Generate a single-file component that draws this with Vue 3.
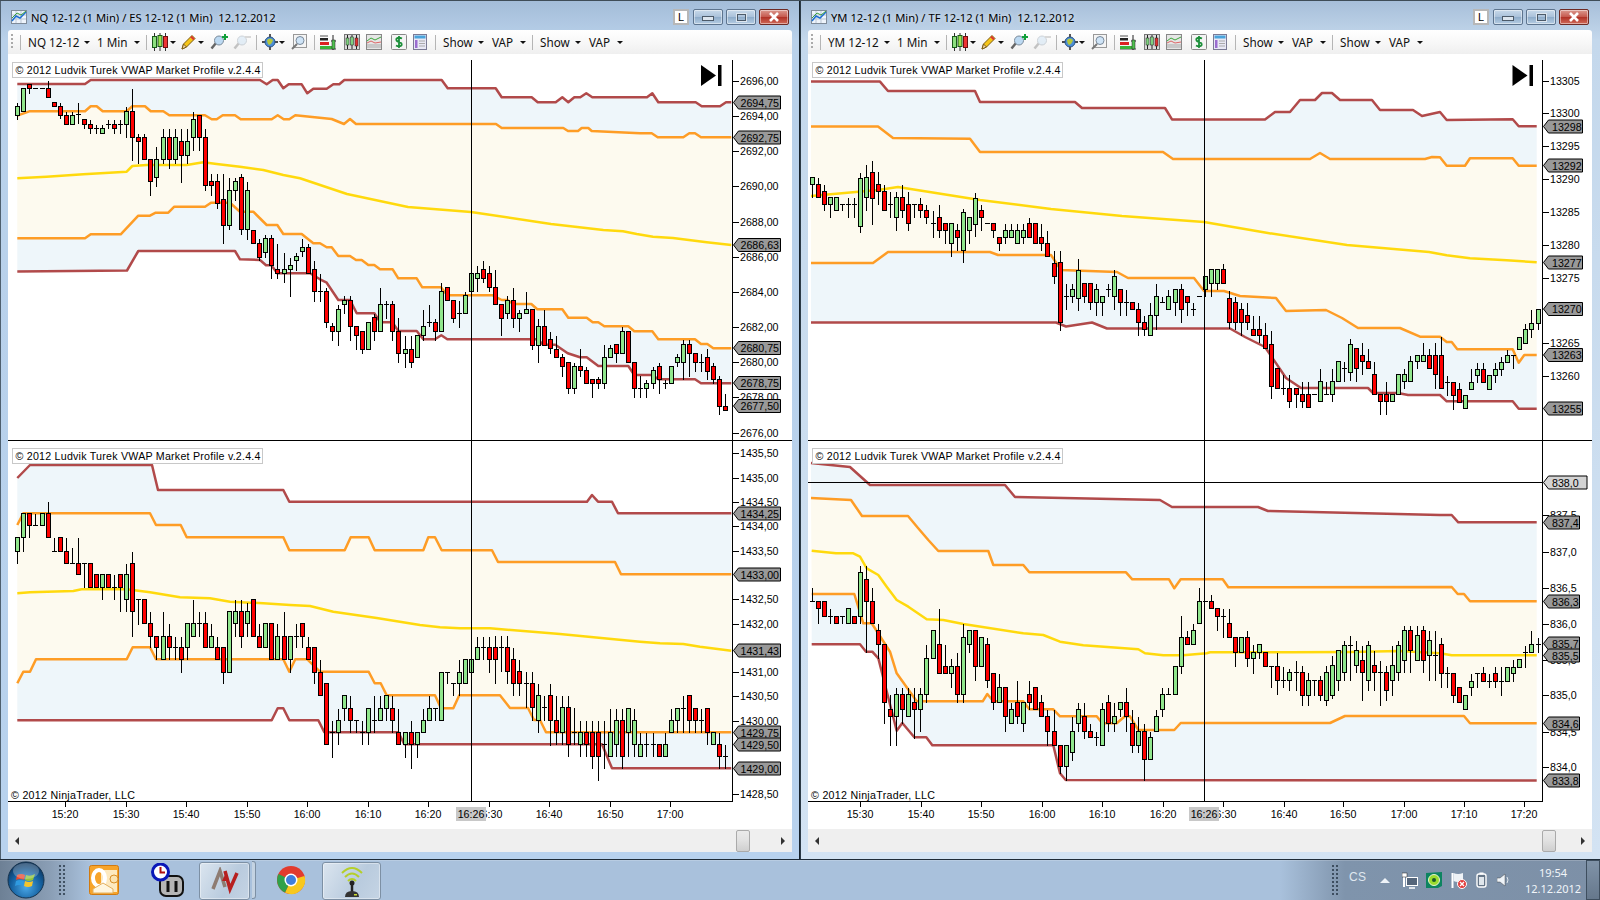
<script setup>
const P = 6.05;
function build(x0, segs) {
  const list = [];
  for (const s of segs) {
    const t = s.d.trim().split(/\s+/);
    let i = s.i;
    for (let n = 0; n + 4 < t.length; n += 5) {
      const [h, a, b, l] = t.slice(n + 1, n + 5).map((v) => s.y + Number(v) * s.k);
      list.push({ i, c: t[n], h, a, b, l });
      i++;
    }
  }
  return paths(x0, list);
}
function paths(x0, list) {
  let wick = '', green = '', red = '';
  for (const c of list) {
    const x = Math.round(x0 + P * c.i) + 0.5;
    const h = Math.round(c.h) + 0.5, a = Math.round(c.a) + 0.5, b = Math.round(c.b) + 0.5, l = Math.round(c.l) + 0.5;
    if (h !== l) wick += `M${x} ${h}V${l}`;
    if (c.c === 'd' || a === b) {
      wick += `M${x - 2.5} ${a}H${x + 2.5}`;
    } else {
      const r = `M${x - 2} ${a}h4V${b}h-4z`;
      if (c.c === 'g') green += r; else red += r;
    }
  }
  return { wick, green, red };
}
function gen3() {
  const an = [[0,185],[2.5,201],[8,201],[10,176],[12.6,204],[17.6,209],[22.7,230],[25.2,230],[27.8,211],[31,237],[37,230],[39.6,257],[41.8,298],[43.8,281],[47.2,296],[50.5,286],[53,308],[55.6,327],[57.3,306],[60.7,296],[63.2,306],[65.8,275],[67.9,267],[69,311],[71.7,321],[75,344],[77,378],[79.3,396],[82.6,400],[85,393],[86.8,374],[89.8,357],[91.9,367],[93.6,395],[96,395],[98.3,374],[100.6,354],[103.4,367]];
  const st = 6.57;
  let seed = 11;
  const rnd = () => { seed = (seed * 16807) % 2147483647; return seed / 2147483647; };
  const center = (i) => {
    for (let k = 0; k < an.length - 1; k++) {
      if (i >= an[k][0] && i <= an[k + 1][0]) {
        const f = (i - an[k][0]) / (an[k + 1][0] - an[k][0]);
        return an[k][1] + (an[k + 1][1] - an[k][1]) * f;
      }
    }
    return an[an.length - 1][1];
  };
  const big = { 8: ['g', 172, 178, 226, 232], 10: ['r', 160, 172, 198, 224], 41: ['r', 250, 262, 322, 330], 76: ['r', 330, 344, 386, 398], 44: ['g', 258, 270, 298, 310], 27: ['g', 192, 198, 224, 236], 25: ['g', 208, 212, 250, 262], 89: ['g', 338, 344, 372, 380], 69: ['r', 290, 298, 322, 328] };
  const list = [];
  for (let i = 0; i < 104; i++) {
    if (big[i]) { const b = big[i]; list.push({ i, c: b[0], h: b[1], a: b[2], b: b[3], l: b[4] }); continue; }
    const m = center(i) + (rnd() - 0.5) * 8;
    const n = [0, 1, 1, 2, 2, 3][Math.floor(rnd() * 6)];
    const a = Math.round((m - n * st / 2) / st) * st;
    const b = a + n * st;
    const dir = center(i + 1) - center(i - 1);
    list.push({ i, c: n === 0 ? 'd' : (dir + (rnd() - 0.5) * 10 < 0 ? 'g' : 'r'), h: a - st * Math.floor(rnd() * 3), a, b, l: b + st * Math.floor(rnd() * 3) });
  }
  return list;
}
function seg3(x0) {
  const tail = [
    ['r',828,885,985,985],['d',945,966,966,1006],['r',966,966,1006,1046],['r',966,986,1025,1025],['g',1006,1006,1045,1045],['g',925,966,986,986],['g',905,926,946,966],['r',905,926,966,966],['g',946,946,986,986],['g',905,926,946,966],['g',888,907,926,945],['g',866,885,907,907],['d',885,885,885,925],['g',830,830,868,868],['g',788,808,848,848],['g',748,788,808,830],['g',748,748,788,808]
  ].map((v, n) => ({ i: 104 + n, c: v[0], h: 60 + v[1] / 3, a: 60 + v[2] / 3, b: 60 + v[3] / 3, l: 60 + v[4] / 3 }));
  return paths(x0, gen3().concat(tail));
}

const c1 = build(17.3, [
  { i: 0, y: 60, k: 1 / 3, d: `g 127 139 166 178 g 85 85 154 154 r 73 73 85 100 d 85 85 85 85 d 85 85 85 85 r 60 85 112 112 r 127 127 139 139 r 127 139 166 175 r 153 166 193 193 g 153 166 193 193 d 127 163 163 190 r 178 178 193 205 r 178 193 205 220 d 193 205 205 220 g 193 205 220 220 d 178 193 193 205 r 178 193 205 220 d 178 193 193 220 g 139 154 193 232 r 85 154 232 300 r 220 232 244 310 r 220 232 298 298 r 298 298 364 405 g 258 298 352 378 g 205 232 298 310 r 205 232 298 325 g 205 232 298 310 r 205 244 286 365 g 205 244 286 310 g 153 178 232 270 r 165 166 232 270 r 205 232 376 390 r 340 364 376 405 r 340 364 430 445 r 340 418 496 550 g 352 391 496 508 g 352 364 391 420 r 340 352 508 522 g 364 391 508 538` },
  { i: 39, y: 230, k: 1 / 3, d: `r 0 0 40 40 r 25 40 80 90 g 12 25 65 80 r 12 25 106 145 r 40 118 130 145 g 65 118 130 157 g 80 106 118 197 g 65 79 91 120 g 25 52 64 78 r 40 52 130 130 r 90 118 184 212 d 130 184 184 212 r 172 184 277 290 r 277 289 303 330 g 222 238 303 344 g 195 211 223 250 r 195 211 289 330 r 289 289 316 356 r 304 304 356 370 g 277 277 356 356 r 250 262 304 330 g 172 223 304 304 d 210 223 223 263 r 210 223 304 330 r 262 304 370 395 g 316 356 370 410 r 316 356 395 410 g 316 316 382 382 g 237 289 316 330 d 223 277 277 289 r 263 277 304 330 g 157 184 304 304 r 172 172 211 211 r 211 211 263 277 d 211 250 250 290 g 184 196 250 250 g 105 130 184 184 g 105 130 145 184 r 90 118 145 157 r 105 130 172 184 r 118 172 223 223 r 223 223 263 316 g 195 211 250 263 r 172 211 263 290 g 237 250 263 304 g 184 238 250 250 r 238 238 344 356 g 263 289 344 395 r 237 289 344 344 r 304 328 355 370 r 316 356 382 382 r 370 382 409 437 r 395 395 475 488 g 395 409 475 488 r 355 409 421 437 r 409 421 460 460 r 448 448 460 502 r 437 448 460 475 g 343 382 460 475 g 343 355 382 382 r 343 343 370 395 g 289 304 370 370 r 304 304 395 395 r 395 395 475 502 d 435 475 475 502 g 448 460 475 502 g 408 421 460 475 r 395 409 448 488 d 448 460 460 475 g 408 409 460 460 g 370 382 395 408 g 328 343 395 448 r 328 343 370 437 r 370 370 395 422 d 370 395 395 422 r 355 382 422 448 r 395 409 448 460 r 435 448 528 553 r 488 528 541 541` }
]);
const c2 = build(17.3, [
  { i: 0, y: 490, k: 1 / 3, d: `g 142 142 182 218 g 70 70 142 182 r 70 70 106 142 d 70 106 106 106 g 70 70 106 106 r 33 70 142 142 d 142 182 182 182 r 142 142 182 182 r 142 182 218 218 d 170 218 218 218 r 142 218 253 253 d 218 218 218 290 r 218 218 290 290 r 253 253 290 290 g 253 253 290 326 r 253 253 290 290 d 253 290 290 326 r 253 253 290 362 g 218 253 326 362 r 182 218 362 437 d 326 326 326 402 r 326 326 400 400 r 362 400 437 472 r 437 437 472 508 g 362 437 508 508 r 400 437 472 508 d 437 472 472 508 r 437 472 508 545 g 400 400 472 508 g 326 400 437 437 d 362 400 400 437 r 362 400 472 472 g 400 437 472 472 r 437 472 508 508 r 472 472 545 580 g 362 362 545 545 g 326 362 400 437 r 326 362 437 472 g 336 362 400 437 r 326 326 437 437 r 400 437 472 472 g 400 400 472 472 r 400 400 508 508 g 400 437 508 508 r 362 437 508 508 g 437 437 508 545 d 400 437 437 472 r 400 400 437 472 r 437 472 508 508 r 472 472 545 580 r 508 545 616 616 r 580 580 763 763 d 690 727 727 800 g 655 691 727 763 g 616 616 655 690 r 616 655 691 727 d 691 691 691 727 d 691 727 727 763 g 655 655 727 763 d 616 691 691 727 g 616 655 691 691 g 616 616 655 691 r 616 655 691 727 r 655 727 763 763 g 727 727 763 800 r 690 727 763 835 g 727 727 763 800 g 655 691 727 727 g 616 655 691 691 d 655 655 655 691 g 545 545 691 691 d 545 545 545 580 d 580 580 580 616 g 508 545 580 616 g 508 508 580 580 g 472 508 545 545 g 437 472 508 508 d 437 472 472 508 r 437 472 508 545` },
  { i: 79, y: 0, k: 1, d: `r 635 647 659 683 d 635 647 647 671 r 635 647 671 683 r 647 659 683 695 r 659 671 683 695 d 671 683 683 707 r 671 683 707 720 g 683 695 720 732 d 695 707 707 720 r 683 695 720 745 r 695 720 732 744 g 695 707 732 744 r 695 707 744 756 d 707 732 732 744 g 720 732 744 756 r 720 732 744 756 r 720 732 756 768 r 720 732 756 780 d 720 744 744 768 g 708 732 756 756 g 708 720 744 756 r 708 720 756 768 g 708 708 732 756 g 708 720 744 756` },
  { i: 103, y: 440, k: 1 / 3, d: `g 877 913 948 948 d 877 913 913 949 d 877 913 913 949 r 913 913 949 949 g 877 913 949 949 g 805 841 877 877 g 805 805 841 877 d 765 805 805 877 r 765 765 841 877 r 805 805 841 877 d 805 841 841 877 r 805 805 877 913 g 877 877 913 913 r 877 913 949 985 d 913 949 949 985` }
]);
const c3 = seg3(811.5);
const c4 = build(811.5, [
  { i: 0, y: 540, k: 1 / 3, d: `d 142 184 184 184 r 184 184 205 250 r 184 184 227 227 d 205 227 227 250 r 227 227 250 250 d 227 227 227 250 g 205 205 250 250 r 227 227 250 250 g 75 97 227 250 r 75 118 184 335 r 142 184 250 250 r 250 271 313 355 r 313 313 485 550 r 463 507 529 616 g 442 463 529 616 r 442 463 507 550 g 442 463 529 529 r 442 485 507 594 g 442 463 507 572 g 313 355 463 485 g 270 270 355 355 r 205 313 400 400 r 313 379 400 400 g 355 379 400 442 r 335 379 463 485 g 250 292 463 485 g 270 270 313 335 r 270 270 379 421 g 292 292 379 379 r 292 313 421 442 r 400 400 485 507 g 400 442 485 485 r 442 442 529 572 g 485 507 550 550 r 421 485 529 550 g 485 485 550 572 r 421 463 485 507 r 442 442 507 507 r 463 485 529 529 r 507 529 572 616 r 507 572 616 616 r 616 616 679 700 g 616 616 679 720 g 529 572 637 660 g 485 507 550 572 r 485 529 572 594 r 550 572 592 592 d 572 592 592 616 g 485 507 616 616 r 463 485 550 572 g 485 529 550 572 g 485 485 507 529 r 442 485 529 572 r 507 550 616 637 g 529 572 616 637 r 550 572 658 720 g 572 592 658 658 g 507 529 572 572 g 442 463 507 529 d 442 463 463 463 g 379 379 463 463 g 225 292 379 400 r 270 292 313 313 g 250 270 313 313 g 142 184 250 250 d 184 184 184 184 r 163 184 205 205 r 205 205 227 270 d 205 227 227 292 r 205 250 292 292 r 292 292 335 379 g 292 292 335 335 r 270 292 355 379 g 313 335 355 400 g 313 313 335 355 r 335 335 379 379 d 379 379 379 442 r 335 379 421 463 d 379 421 421 442` },
  { i: 79, y: 0, k: 1, d: `g 668 672 680 690 d 660 672 672 690 r 665 672 695 705 g 672 680 695 705 d 680 680 680 695 r 675 680 695 700 g 665 672 700 705 g 655 665 695 698 g 650 650 680 690 g 640 645 672 680 d 635 645 645 680 g 640 650 665 672 r 645 660 672 700 g 640 645 680 690 r 650 665 672 690 d 660 672 672 705 r 665 672 690 700 g 645 665 680 695 g 640 645 672 680 g 625 630 660 672 r 625 630 650 672 g 625 635 660 660 r 625 630 660 672 g 630 640 655 680 d 630 655 655 680` },
  { i: 104, y: 440, k: 1 / 3, d: `r 590 613 700 742 d 678 700 700 742 r 700 700 764 785 r 742 742 785 785 g 764 764 808 808 g 700 722 742 764 d 700 700 700 742 r 678 700 722 722 d 700 722 722 742 r 678 700 722 742 d 678 722 722 764 g 680 680 722 722 g 656 680 700 722 g 656 656 680 680 d 615 635 635 680 g 570 613 635 635 d 590 612 612 635` }
]);

function chart(o) {
  const rev = (s) => s.trim().split(/\s+/).reverse().join(' ');
  o.fillA = o.r1 + ' ' + rev(o.o1);
  o.fillB = o.o1 + ' ' + rev(o.o2);
  o.fillC = o.o2 + ' ' + rev(o.r2);
  return o;
}

const boxText = '© 2012 Ludvik Turek VWAP Market Profile v.2.4.4';

const windows = [
  {
    id: 'a', cls: 'win-a', x0: 8, title: 'NQ 12-12 (1 Min) / ES 12-12 (1 Min)  12.12.2012', sym: 'NQ 12-12',
    axis: 732, cross: 471, end: 701, boxX: 12.5, thumb: 'thumb-a', tagText: 8.5,
    times: [['15:20',65],['15:30',126],['15:40',186],['15:50',247],['16:00',307],['16:10',368],['16:20',428],['16:30',489],['16:40',549],['16:50',610],['17:00',670]],
    charts: [
      chart({
        boxY: 62.5, c: c1, tagEnd: 780.5,
        r1: '17.3,84 85,84 90.7,80 260,80 266.7,84.3 272.7,80 277.7,80 283.3,88.3 288.7,84.3 301.7,84.3 307.3,93.3 313.3,88.7 326.7,88.7 333.3,84.3 339.3,84.3 344.3,80 441.7,80 447.7,88.3 495.7,88.3 501.7,97.3 531.7,97.3 537.7,102.3 555.7,102.3 562.3,97.3 568.3,102.3 574.3,97.3 580.3,97.3 586.3,93.3 592.3,97.3 647,97.3 652.3,93.3 658.3,102.3 695.7,102.3 701.7,106.3 720,106.3 726,102.3 731.3,102.3',
        o1: '17.3,115.7 29.3,111.3 85,111.3 90.7,106.3 96.7,106.3 102.7,111.3 126.7,111.3 132.3,106.3 145,106.3 150.7,111.3 163.3,111.3 169.3,115.3 205,115.3 211.7,119.3 216.7,119.3 222.7,115.3 235,115.3 240.7,119.3 271.7,119.3 277.7,115.3 283.7,119.3 289.3,119.3 295.3,115.3 331.7,119 344,124 350,119 356,124 496,124 501.7,128 563.3,128 568,131 578,131 581.7,128 588.3,128 591.7,131 640,133.3 651.7,133.3 657.7,137.3 683.3,137.3 689.3,133.3 695,133.3 701,137.3 731.3,137.3',
        v: '17.3,178.3 46.7,176.7 83.3,174.3 126.7,171.7 132.3,166 146.7,165 186.7,165 203.3,162.3 216.7,164 240,166.7 263.3,170 283.3,175 300,178.3 347,194 408,207 471,212 551,224 603.3,230 623,231.3 636.7,234 653,236.7 673,238 706.7,242.3 731.3,245',
        o2: '17.3,238.3 85,238.3 90.7,234.3 120.7,234.3 138.3,215.7 150,215.7 155.7,212.7 168.3,212.7 174.3,206.7 205,206.7 211,202.7 230,202.7 240,211.7 253.3,211.7 266.7,225 277.3,225 283.3,234 301.7,234 313.3,243.3 320,243.3 326.7,247.3 331.7,247.3 338.3,256 350,256 356,260 361.7,260 368.3,265 374.3,265 380,269.3 392.7,269.3 398.3,278.3 416.7,278.3 422.3,287.3 441,287.3 447.3,295.3 492.7,295.3 501.7,300 507.3,300 513.3,304 531.3,304 537.3,309.3 562.3,309.3 568.3,317.7 586.7,317.7 592.7,322.3 598.3,322.3 604.3,326.3 628.3,326.3 634.3,331.3 652.3,331.3 658.3,339.3 695,339.3 701,344 707.3,344 713.3,348.3 731.3,348.3',
        r2: '17.3,271.5 127,270.5 138.3,251 235,251 240,259.3 260,260 266,265.3 271.3,265.3 277.3,273.3 310,273.3 320,279.3 326.7,282.7 338.3,300 350,300 356.7,313.3 374.3,313.3 380.3,322.3 392.3,322.3 398.3,331 416.7,331 423.3,339.3 435,339.3 441.3,335.3 447.3,339.3 537.3,339.3 543.3,344.7 555.3,344.7 567.7,353.3 580,357.3 586.7,357.3 598.3,366 628.3,366 634.3,375 652.3,375 658.3,379.3 695,379.3 701,383.3 731.3,383.3',
        ticks: [['2696,00',80.7],['2694,00',116],['2692,00',151],['2690,00',186],['2688,00',222],['2686,00',257],['2684,00',291.7],['2682,00',327],['2680,00',362],['2678,00',397],['2676,00',433]],
        tags: [['2694,75',102.5],['2692,75',137.5],['2686,63',245],['2680,75',348],['2678,75',383],['2677,50',406]]
      }),
      chart({
        boxY: 448.5, c: c2, tagEnd: 780.5,
        r1: '17.3,478 30,465 152,465 158,490 283.3,490 289.3,501.7 587,501.7 592,495 598,501.7 612,501.7 618,513.3 731.3,513.3',
        o1: '17.3,525 23.3,513.3 150,513.3 156,525 180.7,525 186.7,537.3 283.3,537.3 289.3,550.3 344.7,550.3 350.7,537.3 368.7,537.3 374.7,550.3 423.3,550.3 428.3,537.3 435,537.3 441.7,550.3 492,550.3 498,562 615,562 621,574.3 731.3,574.3',
        v: '17.3,593.3 30,592.3 73.3,591 81.7,589.3 126.7,589.3 150,592.3 180,597.3 210,598.3 230,601.7 263.3,603.3 290,605 310,606 333.3,611.7 376.7,618 420,625 440,627.3 460,628.3 490,628.3 560,634 640,641.7 660,643.3 683.3,644 700,646.7 731.3,650.7',
        o2: '17.3,683.3 23.3,671.7 30,671.7 36,659.3 126.7,659.3 132.7,647.3 150,647.3 156,659.3 283.3,659.3 289.3,671.7 295.3,659.3 307.3,659.3 320,671.7 368.7,671.7 374.7,683.3 380.7,683.3 386.7,695.3 435,695.3 441,708.3 453.3,708.3 459.3,695.3 500,695.3 510,708 528,708 534,720 540,720 546,732.3 731.3,732.3',
        r2: '17.3,720.3 271.7,720.3 277.7,708.3 283.3,708.3 289.3,720.3 318.3,720.3 324.3,732.3 398.3,732.3 404.3,744.3 602,744.3 612,768.3 731.3,768.3',
        ticks: [['1435,50',453],['1435,00',477.7],['1434,50',502],['1434,00',526],['1433,50',550.7],['1432,50',599],['1432,00',624],['1431,00',672],['1430,50',696],['1430,00',720.7],['1428,50',794]],
        tags: [['1434,25',513.5],['1433,00',574.5],['1431,43',650.5],['1429,75',732.5],['1429,50',744.5],['1429,00',768.5]]
      })
    ],
    copyX: 11
  },
  {
    id: 'b', cls: 'win-b', x0: 808, title: 'YM 12-12 (1 Min) / TF 12-12 (1 Min)  12.12.2012', sym: 'YM 12-12',
    axis: 1542, cross: 1204, end: 1512.5, boxX: 812.5, thumb: 'thumb-b', tagText: 10,
    times: [['15:30',860],['15:40',921],['15:50',981],['16:00',1042],['16:10',1102],['16:20',1163],['16:30',1223],['16:40',1284],['16:50',1343],['17:00',1404],['17:10',1464],['17:20',1524]],
    charts: [
      chart({
        boxY: 62.5, c: c3, tagEnd: 1582.5,
        r1: '811,81.6 880,81.6 888,91 975,91 980,102 1075,102 1082,108 1165,108 1172,119.4 1265,119.4 1275,112 1290,112 1300,100 1315,100 1322,93 1332,93 1340,100 1372,100 1380,110 1413,110 1422,116 1440,112 1446.7,120 1512.7,119.3 1518.7,126.3 1536.7,126.3',
        o1: '811,126.5 878,126.5 893,138 970,138.8 980,152 1163,152 1173,159 1310,159 1320,153 1330,159 1425,159 1432,157 1440,157.3 1446.7,165.7 1465,165.7 1470,158.3 1512.7,158.3 1518.7,165.7 1536.7,165.7',
        v: '811,196 878,190 898,187 980,200 1051,209 1122,216 1204,222 1265,232.6 1347,245 1429,252 1446.7,255.3 1470,258.3 1506.7,260.3 1536.7,262.3',
        o2: '811,263 873,263 888,252 990,252 998,255 1051,255 1061,270 1117,272 1128,278 1194,278 1204,291 1224,291 1240,296 1276,298 1286,311 1326,310 1342,318 1358,328 1400,328 1420,336.7 1440,336.7 1446.7,342 1451.7,342 1457.3,349.3 1512.7,349.3 1518.7,362.7 1524.3,355 1536.7,355',
        r2: '811,322.5 1056,322.5 1066,326.5 1092,322.5 1107,328.5 1230,328.5 1245,337 1265,347 1286,378 1301,388 1368,388 1373,393 1398,393 1408,395 1440,395 1446.7,401.3 1512.7,401.3 1518.7,408.7 1536.7,408.7',
        ticks: [['13305',81],['13300',112.7],['13295',146],['13290',179],['13285',212],['13280',245],['13275',278],['13265',343],['13260',376]],
        tags: [['13298',126.5],['13292',165.5],['13277',262.5],['13270',309],['13263',355],['13255',408.5]]
      }),
      chart({
        boxY: 448.5, c: c4, tagEnd: 1579.5,
        r1: '811,463 850,467 870,485 1005,485 1015,497 1160,500 1172,507 1258,507 1268,511 1440,515 1451.7,515 1458.3,522.3 1536.7,522.3',
        o1: '811,498 851,500 862,516 908,516 918,528 928.3,540 938.3,551 988.3,551 993.3,565 1023.3,565 1029.3,572.3 1126,572.3 1132.3,579.3 1169,579.3 1174.3,588.3 1180.7,579.3 1222.7,579.3 1228.3,587.3 1451.7,587 1457.7,594 1464,594 1470,601.3 1536.7,601.3',
        v: '811.7,550.7 836,553.3 853.3,553.3 860,556.7 866.7,568.3 878.3,575 886.7,586.7 896.7,600 908.3,606.7 926.7,619.3 943.3,620 963.3,624 1023.3,633.3 1043.3,635 1060,641.7 1083.3,645.3 1138.3,649.3 1145,653.3 1163.3,655.3 1183,655.3 1206.7,653.3 1210,652.3 1290,652.3 1350,652 1400,651 1440,653.3 1451.7,655.3 1536.7,655.3',
        o2: '811.7,594 854.3,594 863.3,623.3 871.7,623.3 890,651.7 896.7,673.3 916.7,701.3 982.7,701.3 987.3,694 993.3,701.3 1023.3,701.3 1029.3,709.3 1053.3,709.3 1060,716.3 1096.7,716.3 1102.3,723.3 1116.7,723.3 1125,716.3 1130,716.3 1138.3,730 1174.3,730 1180.7,723 1330,723 1345,716 1464,716 1470,723.3 1536.7,723.3',
        r2: '811.7,644.3 860,644.3 866,651.7 872.3,651.7 878.3,658.3 896.7,730.7 902.3,723 914.3,737.3 926.3,737.3 932.3,745.3 1053.3,745.3 1060,773.3 1065.7,780 1536.7,780.5',
        ticks: [['837,5',515],['837,0',552.3],['836,5',588],['836,0',624],['835,5',660],['835,0',695],['834,5',731.7],['834,0',767.3]],
        tags: [['837,4',522.5],['836,3',601.5],['835,7',643.5],['835,5',655.5],['834,6',723.5],['833,8',780.5]],
        level: 482.5
      })
    ],
    copyX: 811
  }
];

function tagPts(w, y, b) {
  const a = w.axis + 1.5;
  return `${a},${y} ${a + 5},${y - 6.5} ${b},${y - 6.5} ${b},${y + 6.5} ${a + 5},${y + 6.5}`;
}

const toolItems = (sym) => [
  { t: 'grip', w: 9 }, { t: 'sep', w: 8 },
  { t: 'text', l: sym, w: 56 }, { t: 'caret', w: 13 },
  { t: 'text', l: '1 Min', w: 37 }, { t: 'caret', w: 12 }, { t: 'sep', w: 6 },
  { t: 'i', n: 'candles', w: 18 }, { t: 'caret', w: 11 },
  { t: 'i', n: 'pencil', w: 17 }, { t: 'caret', w: 12 },
  { t: 'i', n: 'zin', w: 23 }, { t: 'i', n: 'zout', w: 23 }, { t: 'sep', w: 6 },
  { t: 'i', n: 'globe', w: 17 }, { t: 'caret', w: 12 },
  { t: 'i', n: 'mag', w: 23 }, { t: 'sep', w: 6 },
  { t: 'i', n: 'bars', w: 24 }, { t: 'i', n: 'cbox', w: 22 }, { t: 'i', n: 'lbox', w: 25 }, { t: 'i', n: 'dollar', w: 22 }, { t: 'i', n: 'table', w: 22 }, { t: 'sep', w: 8 },
  { t: 'text', l: 'Show', w: 35 }, { t: 'caret', w: 14 }, { t: 'text', l: 'VAP', w: 28 }, { t: 'caret', w: 12 }, { t: 'sep', w: 8 },
  { t: 'text', l: 'Show', w: 35 }, { t: 'caret', w: 14 }, { t: 'text', l: 'VAP', w: 28 }, { t: 'caret', w: 12 }
];
</script>

<template>
  <div class="screen">
    <div class="desktop">
      <section v-for="w in windows" :key="w.id" class="win" :class="w.cls">
        <header class="titlebar">
          <svg class="app-icon" width="16" height="14" viewBox="0 0 16 14">
            <rect x="0.5" y="0.5" width="15" height="13" fill="#eef4fb" stroke="#7f8b99" />
            <path d="M1 5H15M1 9H15M5 1V13M10 1V13" stroke="#b9c6d6" />
            <path d="M1 11L5 6L9 8L15 2" fill="none" stroke="#1f6fd0" stroke-width="1.5" />
            <path d="M1 8L6 3L10 5L15 1" fill="none" stroke="#3da03d" />
          </svg>
          <span class="title-text">{{ w.title }}</span>
          <span class="fill"></span>
          <span class="l-btn">L</span>
          <span class="cap-btn"><i class="min-glyph"></i></span>
          <span class="cap-btn"><i class="max-glyph"></i></span>
          <span class="cap-btn close"><svg width="14" height="10" viewBox="0 0 14 10"><path d="M3 1L11 9M11 1L3 9" stroke="#fff" stroke-width="2.6" /></svg></span>
        </header>

        <nav class="toolbar">
          <span v-for="(it, n) in toolItems(w.sym)" :key="n" class="slot" :style="{ width: it.w + 'px' }">
            <i v-if="it.t === 'grip'" class="grip"></i>
            <i v-else-if="it.t === 'sep'" class="sep"></i>
            <span v-else-if="it.t === 'text'" class="tool-text">{{ it.l }}</span>
            <i v-else-if="it.t === 'caret'" class="caret"></i>
            <svg v-else-if="it.n === 'candles'" width="16" height="18" viewBox="0 0 16 18">
              <path d="M2.5 0V18M8 0V18M13.5 0V18" stroke="#333" />
              <rect x="0.5" y="3.5" width="4" height="11" fill="#8de07f" stroke="#1a5a1a" />
              <rect x="6" y="2.5" width="4" height="11" fill="#9be24f" stroke="#1a5a1a" />
              <rect x="11.5" y="3.5" width="4" height="11" fill="#e33" stroke="#701010" />
            </svg>
            <svg v-else-if="it.n === 'pencil'" width="15" height="16" viewBox="0 0 15 16">
              <path d="M1 15L2.5 10L11 1.5L14 4.5L5.5 13Z" fill="#f5c518" stroke="#7a5a10" />
              <path d="M1 15L2.5 10L5.5 13Z" fill="#f3d8a8" stroke="#7a5a10" />
              <path d="M10 2.5L13 5.5" stroke="#d33" stroke-width="2" />
            </svg>
            <svg v-else-if="it.n === 'zin' || it.n === 'zout'" width="19" height="16" viewBox="0 0 19 16" :class="{ faded: it.n === 'zout' }">
              <path d="M6 9L1.5 14.5" stroke="#666" stroke-width="2.5" />
              <circle cx="9" cy="6.5" r="4.5" fill="#bcd9f2" stroke="#7a8a9a" />
              <path v-if="it.n === 'zin'" d="M15 0V6M12 3H18" stroke="#12a03a" stroke-width="2" />
              <path v-else d="M12 3H18" stroke="#999" stroke-width="2" />
            </svg>
            <svg v-else-if="it.n === 'globe'" width="16" height="16" viewBox="0 0 16 16">
              <path d="M8 0V16M0 8H16" stroke="#111" stroke-width="1.4" />
              <circle cx="8" cy="8" r="5" fill="#4d8fd6" stroke="#274f84" />
              <path d="M5 6Q8 3 11 6Q10 10 7 11Q5 9 5 6Z" fill="#b5c83c" />
            </svg>
            <svg v-else-if="it.n === 'mag'" width="16" height="16" viewBox="0 0 16 16">
              <rect x="2.5" y="0.5" width="13" height="13" fill="#f5f5f5" stroke="#999" />
              <circle cx="9" cy="6.5" r="4" fill="#cfe4f7" stroke="#7a8a9a" />
              <path d="M6 10L1 15" stroke="#777" stroke-width="2" />
            </svg>
            <svg v-else-if="it.n === 'bars'" width="17" height="17" viewBox="0 0 17 17">
              <path d="M0 2H8M0 15H16" stroke="#555" />
              <rect x="0" y="4" width="8" height="2.5" fill="#222" />
              <rect x="0" y="8" width="9" height="3" fill="#d22" />
              <rect x="0" y="12" width="12" height="3" fill="#3bb33b" />
              <path d="M13 1V16M11 7H16" stroke="#222" />
              <rect x="12" y="6" width="3" height="9" fill="#4fc04f" stroke="#222" stroke-width="0.5" />
            </svg>
            <svg v-else-if="it.n === 'cbox'" width="16" height="16" viewBox="0 0 16 16">
              <rect x="0.5" y="0.5" width="15" height="15" fill="#ddd" stroke="#777" />
              <path d="M3.5 1V15M8 1V15M12.5 1V15" stroke="#222" />
              <rect x="2" y="4" width="3" height="7" fill="#7fd07f" stroke="#222" stroke-width="0.5" />
              <rect x="6.5" y="3" width="3" height="8" fill="#7fd07f" stroke="#222" stroke-width="0.5" />
              <rect x="11" y="4" width="3" height="8" fill="#d33" stroke="#222" stroke-width="0.5" />
            </svg>
            <svg v-else-if="it.n === 'lbox'" width="16" height="16" viewBox="0 0 16 16">
              <rect x="0.5" y="0.5" width="15" height="15" fill="#e6e6e6" stroke="#888" />
              <path d="M1 7L5 4L9 6L15 3" fill="none" stroke="#3aa83a" />
              <path d="M1 9L5 7L9 9L15 8" fill="none" stroke="#d66" />
              <path d="M1 11H15M1 13H15" stroke="#aaa" />
            </svg>
            <svg v-else-if="it.n === 'dollar'" width="16" height="16" viewBox="0 0 16 16">
              <rect x="0.5" y="0.5" width="15" height="15" rx="1" fill="#f4f4f4" stroke="#888" />
              <path d="M11 4.5Q8 3 5.5 4.5Q4.5 7 8 8Q11.5 9 10.5 11.5Q8 13 5 11.5M8 2V14" fill="none" stroke="#1c8f3a" stroke-width="1.8" />
            </svg>
            <svg v-else-if="it.n === 'table'" width="14" height="16" viewBox="0 0 14 16">
              <rect x="0.5" y="0.5" width="13" height="15" fill="#e8e8f5" stroke="#7a7a95" />
              <rect x="1.5" y="1.5" width="11" height="3" fill="#4aa4dc" />
              <rect x="2" y="6" width="2.5" height="8" fill="#9a6ccf" />
              <path d="M6 7H12M6 9.5H12M6 12H12" stroke="#aaa" />
            </svg>
          </span>
        </nav>

        <svg class="chart" width="784" height="775" :viewBox="`${w.x0} 54 784 775`">
          <g v-for="(c, k) in w.charts" :key="k">
            <polygon :points="c.fillA" fill="#eef6fa" />
            <polygon :points="c.fillB" fill="#fdfaef" />
            <polygon :points="c.fillC" fill="#eef6fa" />
            <polyline :points="c.r1" class="ln r" />
            <polyline :points="c.o1" class="ln o" />
            <polyline :points="c.v" class="ln y" />
            <polyline :points="c.o2" class="ln o" />
            <polyline :points="c.r2" class="ln r" />
            <path :d="c.c.wick" class="wick" />
            <path :d="c.c.green" class="body green" />
            <path :d="c.c.red" class="body red" />
            <rect :x="w.boxX" :y="c.boxY" width="250" height="15" class="box" />
            <text :x="w.boxX + 3" :y="c.boxY + 11.5" class="box-text" textLength="245">{{ boxText }}</text>
            <line v-if="c.level" :x1="w.x0" :x2="w.axis" :y1="c.level" :y2="c.level" class="axis-line" />
            <g v-for="t in c.ticks" :key="t[0]">
              <line :x1="w.axis" :x2="w.axis + 7" :y1="Math.round(t[1]) + 0.5" :y2="Math.round(t[1]) + 0.5" class="axis-line" />
              <text :x="w.axis + 8" :y="t[1] + 4" class="lab">{{ t[0] }}</text>
            </g>
            <polygon v-if="c.level" :points="tagPts(w, c.level, 1587)" class="tag light" />
            <text v-if="c.level" :x="w.axis + w.tagText" :y="c.level + 4" class="lab">838,0</text>
            <g v-for="t in c.tags" :key="t[0]">
              <polygon :points="tagPts(w, t[1], c.tagEnd)" class="tag" />
              <text :x="w.axis + w.tagText" :y="t[1] + 4" class="lab">{{ t[0] }}</text>
            </g>
          </g>

          <polygon :points="`${w.end},65 ${w.end + 15},75.5 ${w.end},86`" fill="#000" />
          <rect :x="w.end + 17" y="65" width="3.5" height="21" fill="#000" />

          <line :x1="w.x0" :x2="w.x0 + 784" y1="440.5" y2="440.5" class="axis-line" />
          <line :x1="w.cross + 0.5" :x2="w.cross + 0.5" y1="60" y2="801" class="axis-line" />
          <line :x1="w.axis + 0.5" :x2="w.axis + 0.5" y1="60" y2="801" class="axis-line" />
          <line :x1="w.x0" :x2="w.axis + 1" y1="801.5" y2="801.5" class="axis-line" />

          <text :x="w.copyX" y="799" class="lab" textLength="124">© 2012 NinjaTrader, LLC</text>

          <g v-for="t in w.times" :key="t[0]">
            <line :x1="t[1] + 0.5" :x2="t[1] + 0.5" y1="801" y2="807" class="axis-line" />
            <text :x="t[1]" y="818" class="lab mid">{{ t[0] }}</text>
          </g>
          <rect :x="w.cross - 15" y="807" width="30" height="14" fill="#c8c8c8" />
          <text :x="w.cross" y="818" class="lab mid">16:26</text>
        </svg>

        <div class="scroll">
          <svg width="6" height="10" viewBox="0 0 6 10"><path d="M5 1V9L1 5Z" fill="#333" /></svg>
          <span class="fill"></span>
          <i class="thumb" :class="w.thumb"></i>
          <svg width="6" height="10" viewBox="0 0 6 10"><path d="M1 1V9L5 5Z" fill="#333" /></svg>
        </div>
      </section>
    </div>

    <footer class="taskbar">
      <svg class="orb" width="38" height="38" viewBox="0 0 38 38">
        <defs>
          <radialGradient id="orbG" cx="50%" cy="70%" r="70%">
            <stop offset="0" stop-color="#4aa8e8" />
            <stop offset="0.6" stop-color="#14609f" />
            <stop offset="1" stop-color="#0c2f55" />
          </radialGradient>
        </defs>
        <circle cx="19" cy="19" r="18" fill="url(#orbG)" stroke="#16344f" />
        <path d="M10 14Q14 12 18 14L17 19Q13 17 9 19Z" fill="#e8492e" />
        <path d="M19 14Q23 16 28 13L26 19Q22 21 18 19Z" fill="#8fc33a" />
        <path d="M9 20Q13 18 17 20L16 25Q12 23 8 25Z" fill="#2f9ae0" />
        <path d="M18 20Q22 22 26 20L25 25Q21 27 17 25Z" fill="#f4c52c" />
        <ellipse cx="19" cy="10" rx="13" ry="8" fill="#fff" opacity="0.25" />
      </svg>
      <i class="dots dots-l"></i>
      <span class="tb-slot s-outlook">
        <svg width="30" height="30" viewBox="0 0 30 30">
          <rect x="0.5" y="0.5" width="29" height="29" rx="2" fill="#f7a42a" stroke="#d17a10" />
          <rect x="12" y="5" width="16" height="22" fill="#fde9bf" />
          <ellipse cx="10" cy="13" rx="6" ry="8" fill="none" stroke="#fff" stroke-width="4" />
          <path d="M4 24L14 18L24 24V28H4Z" fill="#fff6df" stroke="#e2b060" />
          <circle cx="25" cy="14" r="4" fill="#fbe3b0" stroke="#d8902a" />
        </svg>
      </span>
      <span class="tb-slot s-clock">
        <svg width="33" height="34" viewBox="0 0 33 34">
          <rect x="9" y="13" width="23" height="20" rx="6" fill="#b5b5b5" stroke="#111" stroke-width="2" />
          <path d="M17 18V29M25 18V29" stroke="#111" stroke-width="3" />
          <circle cx="9.5" cy="9" r="8" fill="#fff" stroke="#0a18b8" stroke-width="3" />
          <path d="M9.5 4V9.5H14" fill="none" stroke="#b01010" stroke-width="2" />
        </svg>
      </span>
      <span class="tb-btn b-nt">
        <svg width="28" height="28" viewBox="0 0 28 28">
          <path d="M2 22L9 4L14 20" fill="none" stroke="#8e7c72" stroke-width="3.5" />
          <path d="M14 4L19 22L26 6" fill="none" stroke="#b71f1f" stroke-width="3.5" />
          <path d="M14 8L11 14H17Z" fill="#b71f1f" />
        </svg>
      </span>
      <i class="tb-edge"></i>
      <span class="tb-slot s-chrome">
        <svg width="30" height="30" viewBox="0 0 30 30">
          <circle cx="15" cy="15" r="14" fill="#e23b2e" />
          <path d="M15 15L28.5 11A14 14 0 0 1 9 27.6Z" fill="#f7c81e" />
          <path d="M15 15L9 27.6A14 14 0 0 1 2.5 9Z" fill="#2fa14a" />
          <circle cx="15" cy="15" r="6.5" fill="#fff" />
          <circle cx="15" cy="15" r="5" fill="#3f7fdc" />
        </svg>
      </span>
      <span class="tb-btn b-wifi">
        <svg width="24" height="34" viewBox="0 0 24 34">
          <path d="M2 9Q12 -1 22 9M5 13Q12 6 19 13M8 17Q12 13 16 17" fill="none" stroke="#b5cf2a" stroke-width="2" />
          <circle cx="12" cy="19" r="2.5" fill="#222" />
          <path d="M12 20V28" stroke="#222" stroke-width="2.5" />
          <path d="M5 33Q5 27 12 27Q19 27 19 33Z" fill="#333" />
          <rect x="14" y="30" width="3" height="1.5" fill="#c9d930" />
        </svg>
      </span>
      <span class="fill"></span>
      <i class="dots dots-r"></i>
      <span class="lang">CS</span>
      <svg class="tray t-up" width="10" height="6" viewBox="0 0 10 6"><path d="M0 6L5 1L10 6Z" fill="#eef3f8" /></svg>
      <svg class="tray t-net" width="16" height="17" viewBox="0 0 16 17">
        <rect x="4.5" y="5.5" width="11" height="8" fill="#54657a" stroke="#fff" />
        <path d="M7 16H13" stroke="#fff" stroke-width="1.5" />
        <path d="M2 1V15" stroke="#fff" stroke-width="2" />
        <rect x="0" y="1" width="5" height="4" fill="#fff" stroke="#222" stroke-width="0.5" />
      </svg>
      <svg class="tray t-eye" width="16" height="16" viewBox="0 0 16 16">
        <path d="M0 1L16 0V14L12 16H0Z" fill="#0d8460" />
        <circle cx="8" cy="8" r="5.5" fill="#9bdd2f" stroke="#e6f4d5" />
        <circle cx="8" cy="8" r="2" fill="#1a5a2a" />
      </svg>
      <svg class="tray t-flag" width="16" height="17" viewBox="0 0 16 17">
        <path d="M1.5 1V16" stroke="#fff" stroke-width="2" />
        <path d="M2.5 1Q7 3 12 1V9Q7 11 2.5 9Z" fill="#eef2f6" />
        <circle cx="11" cy="12" r="4.5" fill="#e23b3b" stroke="#fff" />
        <path d="M9 10L13 14M13 10L9 14" stroke="#fff" stroke-width="1.4" />
      </svg>
      <svg class="tray t-batt" width="11" height="16" viewBox="0 0 11 16">
        <rect x="1" y="2" width="9" height="13" rx="2" fill="#667688" stroke="#fff" stroke-width="1.4" />
        <rect x="3.5" y="0.5" width="4" height="2" fill="#fff" />
        <rect x="3" y="5" width="5" height="8" fill="#dfe6ec" />
      </svg>
      <svg class="tray t-vol" width="13" height="14" viewBox="0 0 13 14">
        <path d="M0 5H3L8 1V13L3 9H0Z" fill="#eef3f8" stroke="#333" stroke-width="0.4" />
        <path d="M10 4Q12 7 10 10" fill="none" stroke="#dfe6ec" />
      </svg>
      <div class="clock"><span>19:54</span><span>12.12.2012</span></div>
      <i class="show-desk"></i>
    </footer>
  </div>
</template>

<style>
html, body { margin: 0; padding: 0; background: #8aa0b8; overflow: hidden; }
</style>

<style scoped>
.screen { width: 1600px; height: 900px; display: flex; flex-direction: column; overflow: hidden; font-family: "Liberation Sans", Arial, sans-serif; }
.desktop { display: flex; height: 860px; }
.win { width: 800px; height: 860px; box-sizing: border-box; display: flex; flex-direction: column; padding: 0 8px; border-bottom: 1px solid #1f2c38; position: relative; }
.win-a { background: linear-gradient(#a3bcd8 0, #b9d1ea 40px, #b8d2ee 100%); box-shadow: inset 1px 0 #4e5f6e, inset -1px 0 #16222c; }
.win-b { background: linear-gradient(#a6bed9 0, #c4d8ec 40px, #d3e3f3 100%); box-shadow: inset 1px 0 #2c3a46; }
.titlebar { height: 30px; flex: none; display: flex; align-items: center; box-sizing: border-box; border-top: 1px solid #3f4d58; margin: 0 -8px; padding: 3px 11px 0 11px; }
.app-icon { flex: none; margin-right: 4px; }
.title-text { font-family: "Noto Sans", "Open Sans", sans-serif; font-size: 11.2px; color: #000; white-space: pre; text-shadow: 0 0 5px rgba(255,255,255,.8); }
.fill { flex: 1; }
.l-btn { width: 16px; height: 16px; box-sizing: border-box; border: 2px solid #b7b7b7; background: #fff; font-size: 11px; line-height: 12px; text-align: center; color: #000; margin-right: 4px; }
.cap-btn { width: 30px; height: 16px; box-sizing: border-box; border: 1px solid #5d748e; border-radius: 2px; background: linear-gradient(#c8d9ea, #a9c1da 50%, #8eacca 52%, #b6cde3); margin-right: 3px; display: flex; align-items: center; justify-content: center; box-shadow: inset 0 0 0 1px rgba(255,255,255,.45); }
.cap-btn.close { background: linear-gradient(#dc9a90, #c5584c 50%, #b13226 52%, #d06a5a); border-color: #6f2a24; margin-right: 0; }
.min-glyph { width: 10px; height: 3px; background: #dce5ee; border: 1px solid #4c5a69; display: block; margin-top: 2px; }
.max-glyph { width: 7px; height: 5px; background: transparent; border: 1.5px solid #4c5a69; outline: 1px solid #dce5ee; display: block; }
.toolbar { height: 24px; flex: none; display: flex; align-items: center; box-sizing: border-box; padding-left: 3px; background: linear-gradient(#fff, #f8f8f8 50%, #efefef); border-radius: 3px 3px 0 0; overflow: hidden; }
.slot { flex: none; display: flex; align-items: center; height: 24px; }
.grip { width: 2px; height: 16px; background-image: repeating-linear-gradient(#aaa 0 2px, transparent 2px 4px); }
.sep { width: 1px; height: 15px; background: #b5b5b5; }
.tool-text { font-family: "Noto Sans", "Open Sans", sans-serif; font-size: 11.7px; color: #111; white-space: nowrap; }
.caret { width: 0; height: 0; border-left: 3px solid transparent; border-right: 3px solid transparent; border-top: 3px solid #111; margin-top: 1px; }
.faded { opacity: .35; }
.chart { display: block; flex: none; background: #fff; }
.ln { fill: none; stroke-width: 2.5; stroke-linejoin: round; }
.ln.r { stroke: #a52a2a; stroke-opacity: .85; }
.ln.o { stroke: #ff8c00; stroke-opacity: .85; }
.ln.y { stroke: #ffd700; stroke-opacity: .95; }
.wick { fill: none; stroke: #000; stroke-width: 1; shape-rendering: crispEdges; }
.body { stroke: #000; stroke-width: 1; shape-rendering: crispEdges; }
.green { fill: #90e68c; }
.red { fill: #ff0000; }
.box { fill: #fff; stroke: #c8c8c8; shape-rendering: crispEdges; }
.box-text, .lab { font-family: "Liberation Sans", Arial, sans-serif; font-size: 10.67px; fill: #000; }
.mid { text-anchor: middle; }
.axis-line { stroke: #000; stroke-width: 1; shape-rendering: crispEdges; }
.tag { fill: #999; stroke: #000; stroke-width: 1; shape-rendering: geometricPrecision; }
.tag.light { fill: #d3d3d3; }
.scroll { height: 23px; flex: none; display: flex; align-items: center; background: #efefef; padding: 0 6px; }
.thumb { width: 14px; height: 22px; box-sizing: border-box; border: 1px solid #aaa; border-radius: 2px; background: linear-gradient(#eaeaea, #e2e2e2 45%, #cfcfcf); display: block; }
.thumb-a { margin-right: 30px; }
.thumb-b { margin-right: 24px; }
.taskbar { height: 40px; flex: none; display: flex; align-items: center; position: relative; background: linear-gradient(90deg, #6d8095 0, #8a9eb5 50px, #a9c1dc 90px, #a9c1dc 1280px, #7f94ac 1345px, #7d90a7 1600px); box-shadow: inset 0 1px rgba(255,255,255,.18); }
.orb { flex: none; margin-left: 7px; }
.dots { width: 8px; height: 32px; flex: none; background-image: radial-gradient(circle, rgba(30,45,60,.7) 1px, transparent 1.2px); background-size: 4px 4px; }
.dots-l { margin-left: 13px; }
.dots-r { margin-right: 10px; }
.tb-slot { flex: none; display: flex; align-items: center; }
.s-outlook { margin-left: 23px; }
.s-clock { margin-left: 32px; }
.tb-btn { flex: none; height: 38px; box-sizing: border-box; margin-top: 1px; border: 1px solid #7d90a4; border-radius: 3px; background: linear-gradient(120deg, #dbe5ef, #b9cbde 60%, #c5d4e4); display: flex; align-items: center; justify-content: center; box-shadow: inset 0 0 0 1px rgba(255,255,255,.4); }
.b-nt { width: 51px; margin-left: 15px; }
.tb-edge { width: 4px; height: 38px; flex: none; margin-left: 2px; background: #c4d3e2; border: 1px solid #7d90a4; border-left: 0; border-radius: 0 3px 3px 0; box-sizing: border-box; }
.s-chrome { margin-left: 20px; }
.b-wifi { width: 59px; margin-left: 16px; }
.lang { font-size: 12px; color: #dfe7ef; width: 20px; margin-top: -6px; letter-spacing: .4px; }
.tray { flex: none; }
.t-up { margin-left: 11px; }
.t-net { margin-left: 12px; }
.t-eye { margin-left: 8px; }
.t-flag { margin-left: 9px; }
.t-batt { margin-left: 9px; }
.t-vol { margin-left: 10px; margin-right: 10px; }
.clock { width: 66px; flex: none; margin-top: 2px; display: flex; flex-direction: column; align-items: center; color: #f1f5f9; font-family: "Noto Sans", sans-serif; font-size: 11px; line-height: 16px; }
.show-desk { width: 14px; height: 40px; flex: none; box-sizing: border-box; border: 1px solid #3e4e5e; background: linear-gradient(#8093a8, #66788c); }
</style>
